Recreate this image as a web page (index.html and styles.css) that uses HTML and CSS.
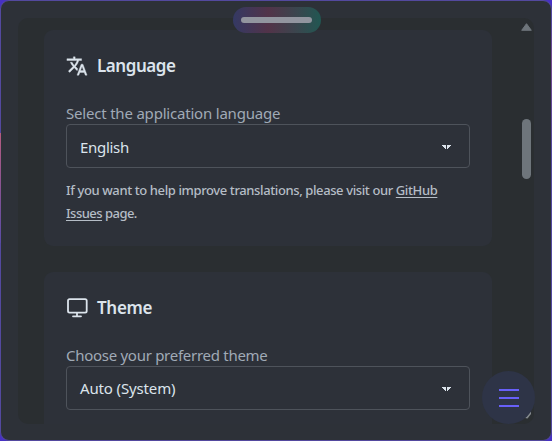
FILE: index.html
```html
<!DOCTYPE html>
<html lang="en">
<head>
<meta charset="utf-8">
<title>Settings</title>
<link rel="stylesheet" href="styles.css">
</head>
<body>
<div class="window">
  <main class="panel">
    <div class="content">
      <section class="card">
        <h2 class="heading">
          <svg class="icon icon-language" viewBox="0 0 24 24"><path d="M12.87 15.07l-2.54-2.51.03-.03A17.52 17.52 0 0 0 14.07 6H17V4h-7V2H8v2H1v2h11.17C11.5 7.92 10.44 9.75 9 11.35 8.07 10.32 7.3 9.19 6.69 8h-2c.73 1.63 1.73 3.17 2.98 4.56l-5.09 5.02L4 19l5-5 3.11 3.11.76-2.04zM18.5 10h-2L12 22h2l1.12-3h4.75L21 22h2l-4.5-12zm-2.62 7l1.62-4.33L19.12 17h-3.24z"/></svg>
          <span class="title-language">Language</span>
        </h2>
        <div class="label"><span class="label-language">Select the application language</span></div>
        <div class="select"><span class="value-language">English</span><svg class="caret" viewBox="0 0 9 4" shape-rendering="crispEdges"><path d="M0 0h4v4h-1v-1h-1v-1h-1v-1h-1zM5 0h4v1h-1v1h-1v1h-1v1h-1z"/></svg></div>
        <p class="hint"><span class="hint-first">If you want to help improve translations, please visit our <a>GitHub</a></span><br><span class="hint-last"><a>Issues</a> page.</span></p>
      </section>
      <section class="card">
        <h2 class="heading">
          <svg class="icon icon-theme" viewBox="0 0 22 22"><rect x="2" y="2.2" width="18.7" height="13.5" rx="1.6"/><path d="M11 16v3M7 19.3h8"/></svg>
          <span class="title-theme">Theme</span>
        </h2>
        <div class="label"><span class="label-theme">Choose your preferred theme</span></div>
        <div class="select select-theme"><span class="value-theme">Auto (System)</span><svg class="caret" viewBox="0 0 9 4" shape-rendering="crispEdges"><path d="M0 0h4v4h-1v-1h-1v-1h-1v-1h-1zM5 0h4v1h-1v1h-1v1h-1v1h-1z"/></svg></div>
      </section>
    </div>
    <div class="scrollbar">
      <svg class="arrow" viewBox="0 0 11 8"><path d="M5.5 0.7L10.3 7.3H.7z"/></svg>
      <div class="thumb"></div>
    </div>
    <svg class="corner" viewBox="0 0 7 8"><path d="M0 7L6 0v3L2.5 7.5z"/></svg>
  </main>
  <div class="handle"><div class="grip"></div></div>
  <div class="menu"><svg viewBox="0 0 20 18"><path d="M0 1h20M0 9h20M0 17h20"/></svg></div>
</div>
</body>
</html>
```
FILE: styles.css
```css
* { box-sizing: border-box; }
body {
  margin: 0;
  width: 552px;
  height: 441px;
  overflow: hidden;
  background: #4731c4;
  font-family: "Noto Sans", "Open Sans", sans-serif;
  color: #dce4ec;
}
.window {
  position: relative;
  height: 441px;
  padding: 17px;
  border: 1px solid #53499f;
  border-radius: 9px;
  background: #2d3138;
}
.window::before {
  content: "";
  position: absolute;
  left: -1px;
  top: 132px;
  width: 1px;
  height: 110px;
  background: linear-gradient(#b55c80, #594ba5);
}
.window::after {
  content: "";
  position: absolute;
  right: -1px;
  top: 20px;
  width: 1px;
  height: 130px;
  background: linear-gradient(#53499f, #754a91 30%, #53499f);
}
.panel {
  position: relative;
  display: flex;
  width: 516px;
  height: 406px;
  padding: 12px 0 0 26px;
  border-radius: 10px;
  overflow: hidden;
  background: #2a2e31;
}
.content {
  display: flex;
  flex-direction: column;
  gap: 26px;
  width: 448px;
}
.card {
  flex: none;
  height: 216px;
  padding: 24px 22px;
  border-radius: 9px;
  background: #2d3139;
}
.heading {
  display: flex;
  align-items: center;
  gap: 9px;
  height: 24px;
  margin: 0 0 23px;
  font-size: 17px;
  font-weight: 600;
  line-height: 24px;
}
.title-language { letter-spacing: -0.45px; }
.title-theme { letter-spacing: -0.3px; }
.icon { width: 22px; height: 22px; }
.icon-language { fill: currentColor; stroke: currentColor; stroke-width: 0.4; }
.icon-theme { fill: none; stroke: currentColor; stroke-width: 1.8; stroke-linecap: round; }
.label, .select, .hint { white-space: nowrap; }
.label {
  height: 23px;
  font-size: 15px;
  line-height: 24px;
  color: #a0aab6;
}
.label-language { letter-spacing: -0.2px; }
.label-theme { letter-spacing: -0.28px; }
.select {
  display: flex;
  align-items: center;
  justify-content: space-between;
  width: 404px;
  height: 44px;
  padding: 2px 18px 0 13px;
  border: 1px solid #4e535b;
  border-radius: 4px;
  font-size: 15px;
}
.select-theme { padding-top: 0; }
.value-language { letter-spacing: -0.3px; }
.value-theme { letter-spacing: -0.14px; }
.caret { width: 9px; height: 4px; fill: #dce4ec; }
.select-theme .caret { margin-top: 2px; }
.hint {
  margin: 11px 0 0;
  font-size: 13px;
  font-weight: 500;
  line-height: 23px;
  color: #b5bdc6;
}
.hint-first { letter-spacing: -0.39px; }
.hint-last { letter-spacing: -0.52px; }
.hint a { text-decoration: underline; text-underline-offset: 2px; }
.scrollbar { width: 42px; padding: 0 2px 0 29px; }
.arrow { display: block; width: 11px; height: 8px; margin-top: -7px; fill: #6e757b; stroke: #6e757b; stroke-linejoin: round; }
.thumb { width: 9px; height: 60px; margin: 88px 0 0 1px; border-radius: 5px; background: #6e757b; }
.corner { position: absolute; left: 507px; top: 393px; width: 7px; height: 8px; fill: #858a8e; }
.handle {
  position: absolute;
  left: 232px;
  top: 6px;
  display: flex;
  align-items: center;
  padding-left: 8px;
  width: 88px;
  height: 26px;
  border-radius: 13px;
  background: linear-gradient(90deg, #343963, #523349 40%, #3a464e 73%, #215752);
}
.grip { width: 71px; height: 6px; border-radius: 3px; background: #92959f; }
.menu {
  position: absolute;
  left: 481px;
  top: 370px;
  padding: 18px 0 0 17px;
  width: 53px;
  height: 53px;
  border-radius: 50%;
  background: #2e3447;
}
.menu svg { display: block; width: 20px; height: 18px; stroke: #6860f8; stroke-width: 2.2; }
```
